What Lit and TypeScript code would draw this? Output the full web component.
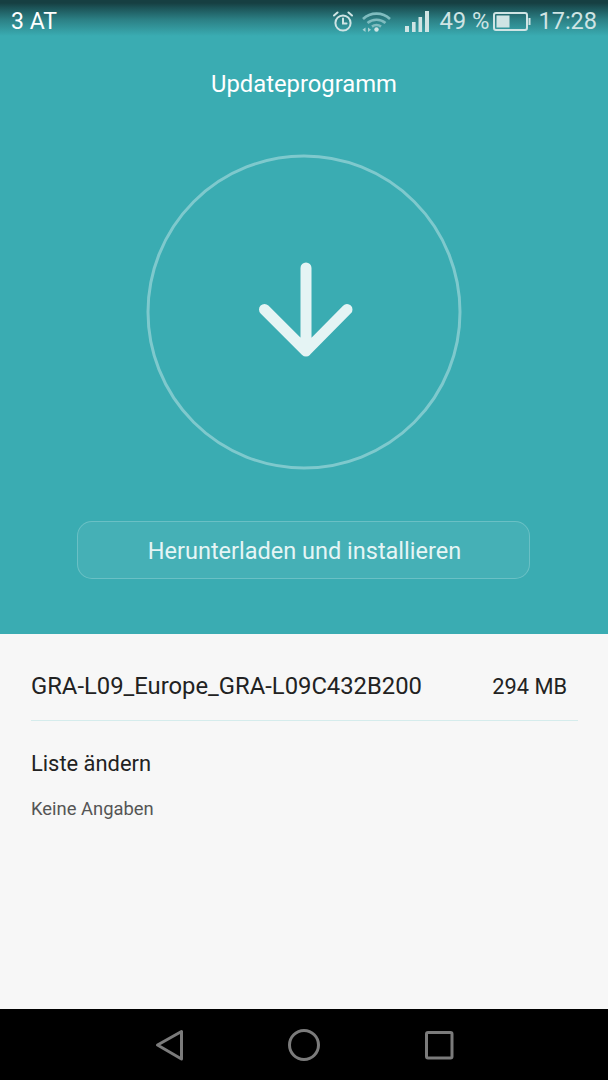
import { LitElement, html, css } from "lit";
import { customElement } from "lit/decorators.js";

@customElement("app-root")
export class AppRoot extends LitElement {
  static styles = css`
    :host {
      display: flex;
      flex-direction: column;
      width: 608px;
      height: 1080px;
      font-family: Roboto, "Noto Sans", sans-serif;
      overflow: hidden;
    }
    .top {
      height: 634px;
      background: #3aacb2;
      display: flex;
      flex-direction: column;
      align-items: center;
      position: relative;
    }
    .shade {
      position: absolute;
      inset: 0 0 auto 0;
      height: 36px;
      background: linear-gradient(#163f42 0, #163f42 3px, #1c5458 8px, #2c8186 20px, #3aacb2 36px);
    }
    .status {
      position: relative;
      align-self: stretch;
      height: 44px;
      display: flex;
      align-items: center;
      padding: 0 11px;
      color: #fff;
      font-size: 23px;
      box-sizing: border-box;
    }
    .carrier { flex: 1; padding-bottom: 2px; }
    .right {
      display: flex;
      align-items: center;
      color: #cfe4e4;
      padding-bottom: 2px;
      font-size: 23.5px;
    }
    .right svg { display: block; }
    .alarm { margin-right: 9px; }
    .wifi { margin-right: 14px; }
    .signal { margin-right: 10px; }
    .pct { margin-right: 4px; font-size: 23.8px; }
    .batt { margin-right: 7px; }
    .title {
      position: relative;
      color: #fff;
      font-size: 23.8px;
      line-height: 28px;
      margin-top: 26px;
    }
    .ring {
      display: block;
      margin-top: 56px;
    }
    .btn {
      margin-top: 51px;
      margin-right: 1px;
      width: 453px;
      height: 58px;
      box-sizing: border-box;
      border: 1px solid rgba(255, 255, 255, 0.2);
      border-radius: 15px;
      background: rgba(255, 255, 255, 0.06);
      color: #e6f5f5;
      font-size: 23.5px;
      display: flex;
      align-items: center;
      justify-content: center;
      padding: 1px 0 0 2px;
    }
    .info {
      flex: 1;
      background: #f7f7f7;
      padding: 0 30px 0 31px;
    }
    .row {
      height: 87px;
      box-sizing: border-box;
      border-bottom: 1px solid #d5ecec;
      display: flex;
      justify-content: space-between;
      align-items: center;
      font-size: 23.8px;
      color: #222;
      padding-right: 11px;
      padding-top: 18px;
    }
    .size { font-size: 21.8px; }
    .heading {
      font-size: 21.9px;
      line-height: 28px;
      color: #222;
      margin-top: 29px;
    }
    .sub {
      font-size: 18.4px;
      line-height: 24px;
      color: #555;
      margin-top: 19px;
    }
    .nav {
      height: 71px;
      background: #000;
    }
    .nav svg { display: block; }
  `;

  render() {
    return html`
      <div class="top">
        <div class="shade"></div>
        <div class="status">
          <span class="carrier">3 AT</span>
          <div class="right">
            <svg class="alarm" width="20" height="21" viewBox="0 0 20 21" fill="none" stroke="#cfe4e4" stroke-width="2" stroke-linecap="round">
              <circle cx="10" cy="12" r="7.6"></circle>
              <path d="M10 7.5v5h3.5"></path>
              <path d="M1 4.5 4.5 1.5M19 4.5 15.5 1.5"></path>
            </svg>
            <svg class="wifi" width="29" height="21" viewBox="0 0 29 21" fill="none" stroke="#7fbcbf" stroke-width="2.6">
              <path d="M1 8C8.5 0.8 20.5 0.8 28 8"></path>
              <path d="M5.5 12C10.5 7.6 18.5 7.6 23.5 12"></path>
              <path d="M10 15.6C12.6 13.6 16.4 13.6 19 15.6"></path>
              <circle cx="14.5" cy="18.5" r="2.2" fill="#cfe4e4" stroke="none"></circle>
              <path d="M3.5 16.5l-3 2.2 3 2.2zM6 16.5l3 2.2-3 2.2z" fill="#a9d2d3" stroke="none"></path>
            </svg>
            <svg class="signal" width="24" height="21" viewBox="0 0 24 21" fill="#cfe4e4">
              <rect x="0" y="15" width="4" height="6"></rect>
              <rect x="7" y="11" width="3.6" height="10"></rect>
              <rect x="13.5" y="6" width="3.6" height="15"></rect>
              <rect x="20" y="0" width="4" height="21"></rect>
            </svg>
            <span class="pct">49 %</span>
            <svg class="batt" width="38" height="19" viewBox="0 0 38 19" fill="none">
              <rect x="1" y="1" width="33" height="17" rx="2" stroke="#cfe4e4" stroke-width="2"></rect>
              <rect x="3.5" y="3.5" width="13" height="12" fill="#cfe4e4"></rect>
              <rect x="35.5" y="6" width="2" height="7" fill="#cfe4e4"></rect>
            </svg>
            <span>17:28</span>
          </div>
        </div>
        <div class="title">Updateprogramm</div>
        <svg class="ring" width="316" height="316" viewBox="0 0 316 316" fill="none">
          <circle cx="158" cy="158" r="156" stroke="#fff" stroke-opacity="0.35" stroke-width="3"></circle>
          <path d="M160 114V197M118.500 155.500 160 197 201 155.500" stroke="#e5f4f4" stroke-width="11" stroke-linecap="round" stroke-linejoin="round"></path>
        </svg>
        <div class="btn">Herunterladen und installieren</div>
      </div>
      <div class="info">
        <div class="row"><span>GRA-L09_Europe_GRA-L09C432B200</span><span class="size">294 MB</span></div>
        <div class="heading">Liste ändern</div>
        <div class="sub">Keine Angaben</div>
      </div>
      <div class="nav">
        <svg width="608" height="71" viewBox="0 0 608 71" fill="none" stroke="#7b7b7b" stroke-width="3" stroke-linejoin="round">
          <path d="M181.500 22.500V50L157.500 36Z"></path>
          <circle cx="304" cy="36" r="14.500"></circle>
          <rect x="426.500" y="23.500" width="25.500" height="25.500" rx="1.500"></rect>
        </svg>
      </div>
    `;
  }
}
